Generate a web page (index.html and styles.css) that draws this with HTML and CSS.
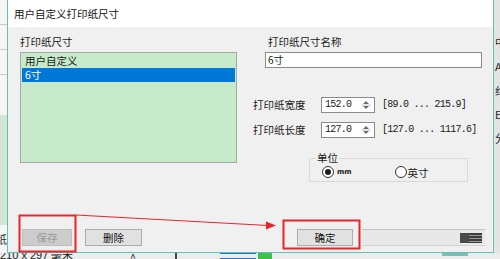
FILE: index.html
```html
<!DOCTYPE html>
<html lang="zh-CN">
<head>
  <meta charset="UTF-8">
  <title>用户自定义打印纸尺寸</title>
  <link rel="stylesheet" href="styles.css">
</head>
<body>
  <div class="screen">
    <!-- app behind the dialog, left edge -->
    <div class="bg-left">
      <div class="bl-row"></div>
      <div class="bl-row"></div>
      <div class="bl-row"></div>
      <div class="bl-green"></div>
      <div class="bl-char">纸</div>
    </div>

    <div class="dialog">
      <div class="titlebar">用户自定义打印纸尺寸</div>
      <div class="dlg-body">
        <div class="columns">
          <div class="col-left">
            <div class="caption">打印纸尺寸</div>
            <div class="listbox">
              <div class="item">用户自定义</div>
              <div class="item selected">6寸</div>
            </div>
          </div>

          <div class="col-right">
            <div class="caption name-caption">打印纸尺寸名称</div>
            <div class="name-input">6寸</div>

            <div class="spin-row first">
              <span class="spin-label">打印纸宽度</span>
              <div class="spinbox">
                <span class="spin-value">152.0</span>
                <svg class="spin-arrows" width="12" height="12" viewBox="0 0 12 12">
                  <path d="M3 5 L6 2 L9 5 Z" fill="#6b6b6b"/>
                  <line x1="1" y1="6" x2="11" y2="6" stroke="#c8c8c8"/>
                  <path d="M3 7 L6 10 L9 7 Z" fill="#6b6b6b"/>
                </svg>
              </div>
              <span class="range">[89.0 ... 215.9]</span>
            </div>
            <div class="spin-row">
              <span class="spin-label">打印纸长度</span>
              <div class="spinbox">
                <span class="spin-value">127.0</span>
                <svg class="spin-arrows" width="12" height="12" viewBox="0 0 12 12">
                  <path d="M3 5 L6 2 L9 5 Z" fill="#6b6b6b"/>
                  <line x1="1" y1="6" x2="11" y2="6" stroke="#c8c8c8"/>
                  <path d="M3 7 L6 10 L9 7 Z" fill="#6b6b6b"/>
                </svg>
              </div>
              <span class="range">[127.0 ... 1117.6]</span>
            </div>

            <fieldset class="unit-box">
              <legend>单位</legend>
              <div class="radio-row">
                <span class="radio checked"><span class="circle"></span><span class="mm">mm</span></span>
                <span class="radio"><span class="circle"></span>英寸</span>
              </div>
            </fieldset>
          </div>
        </div>

        <div class="button-row">
          <button class="btn save" disabled>保存</button>
          <button class="btn delete">删除</button>
          <button class="btn ok">确定</button>
          <div class="statusbar"><span class="grip"></span></div>
        </div>
      </div>
    </div>

    <!-- app behind the dialog, right edge -->
    <div class="bg-right">
      <span>中</span>
      <span>A</span>
      <span>纠</span>
      <span>E</span>
      <span>分</span>
    </div>

    <!-- app behind the dialog, bottom edge -->
    <div class="bg-bottom">
      <span class="paper-size">210 x 297 毫米</span>
      <span class="bb-caret">^</span>
      <span class="bb-sep"></span>
      <span class="bb-blue"></span>
      <span class="bb-green"></span>
      <span class="bb-teal"></span>
    </div>

    <!-- red annotation marks drawn over the screenshot -->
    <svg class="marks" width="500" height="259" viewBox="0 0 500 259">
      <rect x="19.5" y="215.5" width="56" height="36" fill="none" stroke="#e3262b" stroke-width="2"/>
      <rect x="283.5" y="220.5" width="76" height="28" fill="none" stroke="#e3262b" stroke-width="2"/>
      <line x1="76" y1="215" x2="268" y2="225.5" stroke="#e3262b" stroke-width="1.2"/>
      <path d="M266 221.5 L276 225.6 L266 229.5 Z" fill="#e3262b"/>
    </svg>
  </div>
</body>
</html>
```

FILE: styles.css
```css
body {
  margin: 0;
  background: #e9e9e9;
  font-family: "Noto Sans CJK SC", sans-serif;
  font-size: 10.5px;
  color: #1a1a1a;
}
.screen {
  position: relative;
  width: 500px;
  height: 259px;
  overflow: hidden;
  display: grid;
  grid-template-columns: 7px 487px 6px;
  grid-template-rows: 253px 6px;
}

/* background app strips */
.bg-left {
  background: #f6f6f6;
  display: flex;
  flex-direction: column;
  overflow: hidden;
}
.bl-row {
  height: 12px;
  border-bottom: 1px solid #c9c9c9;
  margin-top: 12px;
}
.bl-green {
  margin-top: 40px;
  height: 110px;
  background: #d2e6d3;
}
.bl-char {
  margin-top: 8px;
  font-size: 11px;
  line-height: 12px;
  margin-left: -4px;
  color: #333;
}
.bg-right {
  background: #e4e4e4;
  display: flex;
  flex-direction: column;
  overflow: hidden;
  padding-top: 36px;
  font-size: 11px;
  line-height: 12px;
  color: #222;
}
.bg-right span {
  margin-bottom: 12px;
  margin-left: 1px;
}
.bg-bottom {
  grid-column: 1 / -1;
  background: #ececec;
  display: flex;
  align-items: flex-start;
  overflow: hidden;
  font-size: 11px;
  line-height: 11px;
  color: #222;
}
.paper-size {
  margin-top: -3px;
  font-family: "Liberation Sans", sans-serif;
  width: 130px;
}
.bb-caret {
  margin-top: -1px;
  width: 45px;
}
.bb-sep {
  width: 2px;
  height: 6px;
  background: #444;
  margin-right: 43px;
}
.bb-blue {
  width: 36px;
  height: 4px;
  border-top: 1px solid #2f6fd0;
  border-bottom: 1px solid #2f6fd0;
  margin-right: 2px;
}
.bb-green {
  width: 14px;
  height: 6px;
  background: #3fc04a;
  margin-right: 170px;
}
.bb-teal {
  width: 26px;
  height: 3px;
  background: #7fbcb4;
}

/* dialog */
.dialog {
  border: 1px solid #5fc2b5;
  border-top: none;
  display: flex;
  flex-direction: column;
  min-height: 0;
}
.titlebar {
  height: 27px;
  line-height: 27px;
  background: #fff;
  padding-left: 6px;
  color: #111;
}
.dlg-body {
  flex: 1;
  background: #f0f0f0;
  display: flex;
  flex-direction: column;
}
.columns {
  display: flex;
}
.caption {
  padding-top: 8px;
  line-height: 14px;
  margin-bottom: 3px;
}
.col-left {
  margin-left: 12px;
  width: 217px;
}
.listbox {
  box-sizing: border-box;
  height: 111px;
  border: 1px solid #a2aaa3;
  background: #c7ebca;
  padding: 1px;
}
.item {
  line-height: 14px;
  padding-left: 3px;
}
.item.selected {
  background: #0078d7;
  color: #fff;
}
.col-right {
  margin-left: 16px;
  width: 239px;
  display: flex;
  flex-direction: column;
}
.name-caption {
  padding-left: 15px;
}
.name-input {
  box-sizing: border-box;
  margin-left: 12px;
  width: 217px;
  height: 16px;
  border: 1px solid #8a8a8a;
  background: #fff;
  padding-left: 2px;
  line-height: 14px;
  font-size: 10px;
}
.spin-row {
  display: flex;
  align-items: center;
  height: 16px;
  margin-top: 9px;
}
.spin-row.first {
  margin-top: 29px;
}
.spin-label {
  width: 68px;
  line-height: 16px;
}
.spinbox {
  box-sizing: border-box;
  width: 54px;
  height: 16px;
  border: 1px solid #8a8a8a;
  background: #fff;
  display: flex;
  align-items: center;
}
.spin-value,
.range {
  font-family: "Liberation Mono", monospace;
  font-size: 10px;
  letter-spacing: -0.75px;
  line-height: 14px;
}
.spin-value {
  padding-left: 3px;
}
.spin-arrows {
  margin-left: auto;
  margin-right: 2px;
}
.range {
  margin-left: 7px;
}
.unit-box {
  margin: 14px 0 0 56px;
  width: 159px;
  box-sizing: border-box;
  border: 1px solid #d9d9d9;
  padding: 1px 0 2px 12px;
  min-width: 0;
}
.unit-box legend {
  padding: 0 2px;
  margin-left: -7px;
  line-height: 12px;
}
.radio-row {
  display: flex;
  align-items: center;
  height: 14px;
}
.radio {
  display: flex;
  align-items: center;
  width: 77px;
}
.circle {
  box-sizing: border-box;
  width: 12px;
  height: 12px;
  border: 1px solid #333;
  border-radius: 50%;
  background: #fff;
  display: flex;
  align-items: center;
  justify-content: center;
  margin-right: 1px;
}
.radio.checked .circle::after {
  content: "";
  width: 6px;
  height: 6px;
  border-radius: 50%;
  background: #1e1e1e;
}
.mm {
  font-family: "DejaVu Sans", sans-serif;
  font-size: 7px;
  font-weight: bold;
  margin-left: 2px;
}

/* buttons */
.button-row {
  margin-top: auto;
  margin-bottom: 6px;
  display: flex;
  align-items: center;
  height: 17px;
  padding-left: 14px;
}
.btn {
  box-sizing: border-box;
  height: 17px;
  border: 1px solid #adadad;
  background: #e1e1e1;
  font-family: "Noto Sans CJK SC", sans-serif;
  font-size: 10.5px;
  line-height: 14px;
  color: #111;
  padding: 0;
}
.btn.save {
  width: 50px;
  background: #cccccc;
  border-color: #bfbfbf;
  color: #9a9a9a;
}
.btn.delete {
  width: 57px;
  margin-left: 13px;
}
.btn.ok {
  width: 56px;
  margin-left: 155px;
}
.statusbar {
  box-sizing: border-box;
  margin-left: 9px;
  width: 123px;
  height: 17px;
  background: #e8e8e8;
  border-top: 1px solid #c4c4c4;
  border-bottom: 1px solid #d4d4d4;
  display: flex;
  align-items: center;
  justify-content: flex-end;
  padding-right: 3px;
}
.grip {
  width: 22px;
  height: 10px;
  background: linear-gradient(to right, #4a4a4a 0 9px, transparent 9px),
    repeating-linear-gradient(to bottom, #3c3c3c 0 2px, #9a9a9a 2px 3px);
}

/* annotation overlay */
.marks {
  position: absolute;
  left: 0;
  top: 0;
  pointer-events: none;
}
```
